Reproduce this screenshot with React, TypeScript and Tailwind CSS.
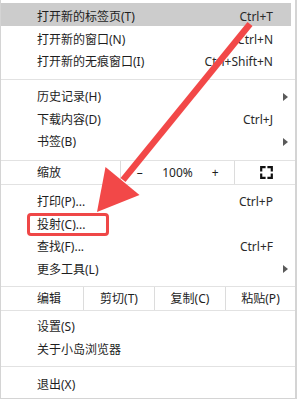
import React from 'react';

type Item = {
  label: string;
  shortcut?: string;
  sub?: boolean;
  active?: boolean;
  boxed?: boolean;
};

const FONT = { fontFamily: '"Noto Sans", "Noto Sans CJK SC", sans-serif' };

const SubArrow = () => (
  <svg width="5" height="8" viewBox="0 0 5 8" className="ml-auto">
    <path d="M0 0L5 4L0 8Z" fill="#5a5a5a" />
  </svg>
);

const MenuRow = ({ item }: { item: Item }) => (
  <div
    className={`relative flex h-[22.5px] items-center pt-[5px] pl-[36px] leading-[17px] text-[12px] text-[#1e1e1e] ${
      item.sub ? 'pr-[7px]' : 'pr-[22px]'
    } ${item.active ? 'mr-[4px] bg-[#cccccc] !pr-[18px]' : ''}`}
  >
    <span>{item.label}</span>
    {item.shortcut && <span className="ml-auto text-[#2a2a2a]">{item.shortcut}</span>}
    {item.sub && <SubArrow />}
    {/* red highlight box around the cast item */}
    {item.boxed && (
      <span className="absolute left-[26px] top-[2.5px] h-[23px] w-[82px] rounded-[4px] border-[3px] border-[#ef4747]" />
    )}
  </div>
);

const Separator = ({ className }: { className?: string }) => (
  <div className={`h-px bg-[#e2e2e2] ${className ?? ''}`} />
);

const FullscreenIcon = () => (
  <svg width="13" height="13" viewBox="0 0 13 13" fill="none" stroke="#111" strokeWidth="2.2" strokeLinecap="square">
    <path d="M1.2 4.5V1.2H4.5" />
    <path d="M8.5 1.2H11.8V4.5" />
    <path d="M11.8 8.5V11.8H8.5" />
    <path d="M4.5 11.8H1.2V8.5" />
  </svg>
);

const top: Item[] = [
  { label: '打开新的标签页(T)', shortcut: 'Ctrl+T', active: true },
  { label: '打开新的窗口(N)', shortcut: 'Ctrl+N' },
  { label: '打开新的无痕窗口(I)', shortcut: 'Ctrl+Shift+N' },
];

const middle: Item[] = [
  { label: '历史记录(H)', sub: true },
  { label: '下载内容(D)', shortcut: 'Ctrl+J' },
  { label: '书签(B)', sub: true },
];

const tools: Item[] = [
  { label: '打印(P)...', shortcut: 'Ctrl+P' },
  { label: '投射(C)...', boxed: true },
  { label: '查找(F)...', shortcut: 'Ctrl+F' },
  { label: '更多工具(L)', sub: true },
];

const bottom: Item[] = [
  { label: '设置(S)' },
  { label: '关于小岛浏览器' },
];

export default function App() {
  return (
    <div className="relative h-[399px] w-[297px] overflow-hidden bg-white" style={FONT}>
      <div className="flex h-[399px] w-[297px] flex-col border-b border-l border-r-2 border-[#d4d4d4] pt-[3px]">
        {top.map((it) => (
          <MenuRow key={it.label} item={it} />
        ))}
        <Separator className="mt-[8.5px] mb-[3px]" />
        {middle.map((it) => (
          <MenuRow key={it.label} item={it} />
        ))}

        {/* zoom controls */}
        <Separator className="mt-[9.5px]" />
        <div className="flex h-[23px] text-[12px] leading-[17px] text-[#1e1e1e]">
          <div className="flex w-[119px] items-center pl-[36px]">缩放</div>
          <div className="grid w-[114px] grid-cols-3 border-l border-[#dcdcdc]">
            <span className="flex items-center justify-center">–</span>
            <span className="flex items-center justify-center">100%</span>
            <span className="flex items-center justify-center">+</span>
          </div>
          <div className="flex flex-1 items-center justify-center border-l border-[#dcdcdc] pl-[2px]">
            <FullscreenIcon />
          </div>
        </div>
        <Separator className="mb-[3px]" />

        {tools.map((it) => (
          <MenuRow key={it.label} item={it} />
        ))}

        {/* edit row */}
        <Separator className="mt-[8px]" />
        <div className="flex h-[23px] text-[12px] leading-[17px] text-[#1e1e1e]">
          <div className="flex w-[82px] items-center pl-[36px]">编辑</div>
          <div className="flex w-[71px] items-center justify-center border-l border-[#dcdcdc]">剪切(T)</div>
          <div className="flex w-[71px] items-center justify-center border-l border-[#dcdcdc]">复制(C)</div>
          <div className="flex flex-1 items-center justify-center border-l border-[#dcdcdc]">粘贴(P)</div>
        </div>
        <Separator className="mb-[2px]" />

        {bottom.map((it) => (
          <MenuRow key={it.label} item={it} />
        ))}
        <Separator className="mt-[8px] mb-[3.5px]" />
        <MenuRow item={{ label: '退出(X)' }} />
      </div>

      {/* annotation arrow */}
      <svg className="pointer-events-none absolute left-0 top-0" width="297" height="399" viewBox="0 0 297 399">
        <line x1="250" y1="24" x2="123" y2="180" stroke="#f24848" strokeWidth="6.5" />
        <polygon points="97,212 139.5,195 105.5,167" fill="#f24848" />
      </svg>
    </div>
  );
}
